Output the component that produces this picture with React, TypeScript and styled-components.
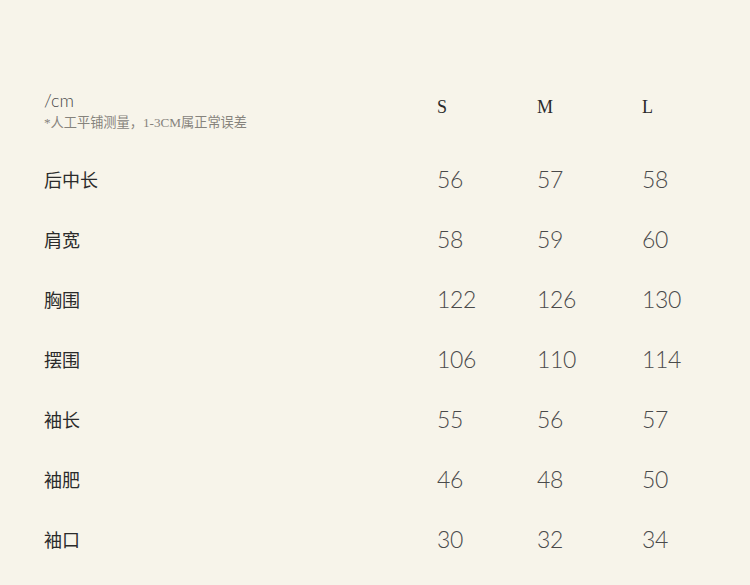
import React from 'react';
import styled, { createGlobalStyle } from 'styled-components';

const GlobalStyle = createGlobalStyle`
  html, body {
    margin: 0;
    padding: 0;
    background: #f7f4ea;
  }
`;

const Page = styled.div`
  width: 750px;
  height: 585px;
  box-sizing: border-box;
  padding: 89px 0 0 44px;
  background: #f7f4ea;
  overflow: hidden;
`;

const Table = styled.div`
  display: grid;
  grid-template-columns: 393px 100px 105px 1fr;
  grid-auto-rows: 60px;
  grid-template-rows: 60px;
  align-items: center;
`;

const UnitCell = styled.div`
  align-self: start;
  display: flex;
  flex-direction: column;
`;

const Unit = styled.div`
  font-family: Lato, "Noto Sans", sans-serif;
  font-weight: 300;
  font-size: 18px;
  line-height: 22px;
  color: #4a4a4a;
`;

const Note = styled.div`
  font-family: "Liberation Serif", "Noto Sans CJK SC", serif;
  font-size: 13.2px;
  line-height: 18px;
  color: #86837c;
  margin-top: 3px;
`;

const SizeHead = styled.div`
  align-self: start;
  padding-top: 7px;
  font-family: "Liberation Serif", serif;
  font-size: 18px;
  line-height: 22px;
  color: #2a2a2a;
`;

const Label = styled.div`
  font-family: "Noto Sans CJK SC", sans-serif;
  font-size: 18px;
  color: #2b2b2b;
`;

const Value = styled.div`
  font-family: Lato, "Noto Sans", sans-serif;
  font-weight: 300;
  font-size: 23px;
  letter-spacing: -0.4px;
  color: #4a4a4a;
`;

const rows: [string, number[]][] = [
  ['后中长', [56, 57, 58]],
  ['肩宽', [58, 59, 60]],
  ['胸围', [122, 126, 130]],
  ['摆围', [106, 110, 114]],
  ['袖长', [55, 56, 57]],
  ['袖肥', [46, 48, 50]],
  ['袖口', [30, 32, 34]],
];

const App: React.FC = () => (
  <>
    <GlobalStyle />
    <Page>
      <Table>
        <UnitCell>
          <Unit>/cm</Unit>
          <Note>*人工平铺测量，1-3CM属正常误差</Note>
        </UnitCell>
        <SizeHead>S</SizeHead>
        <SizeHead>M</SizeHead>
        <SizeHead>L</SizeHead>
        {rows.map(([name, vals]) => (
          <React.Fragment key={name}>
            <Label>{name}</Label>
            {vals.map((v, i) => (
              <Value key={i}>{v}</Value>
            ))}
          </React.Fragment>
        ))}
      </Table>
    </Page>
  </>
);

export default App;
